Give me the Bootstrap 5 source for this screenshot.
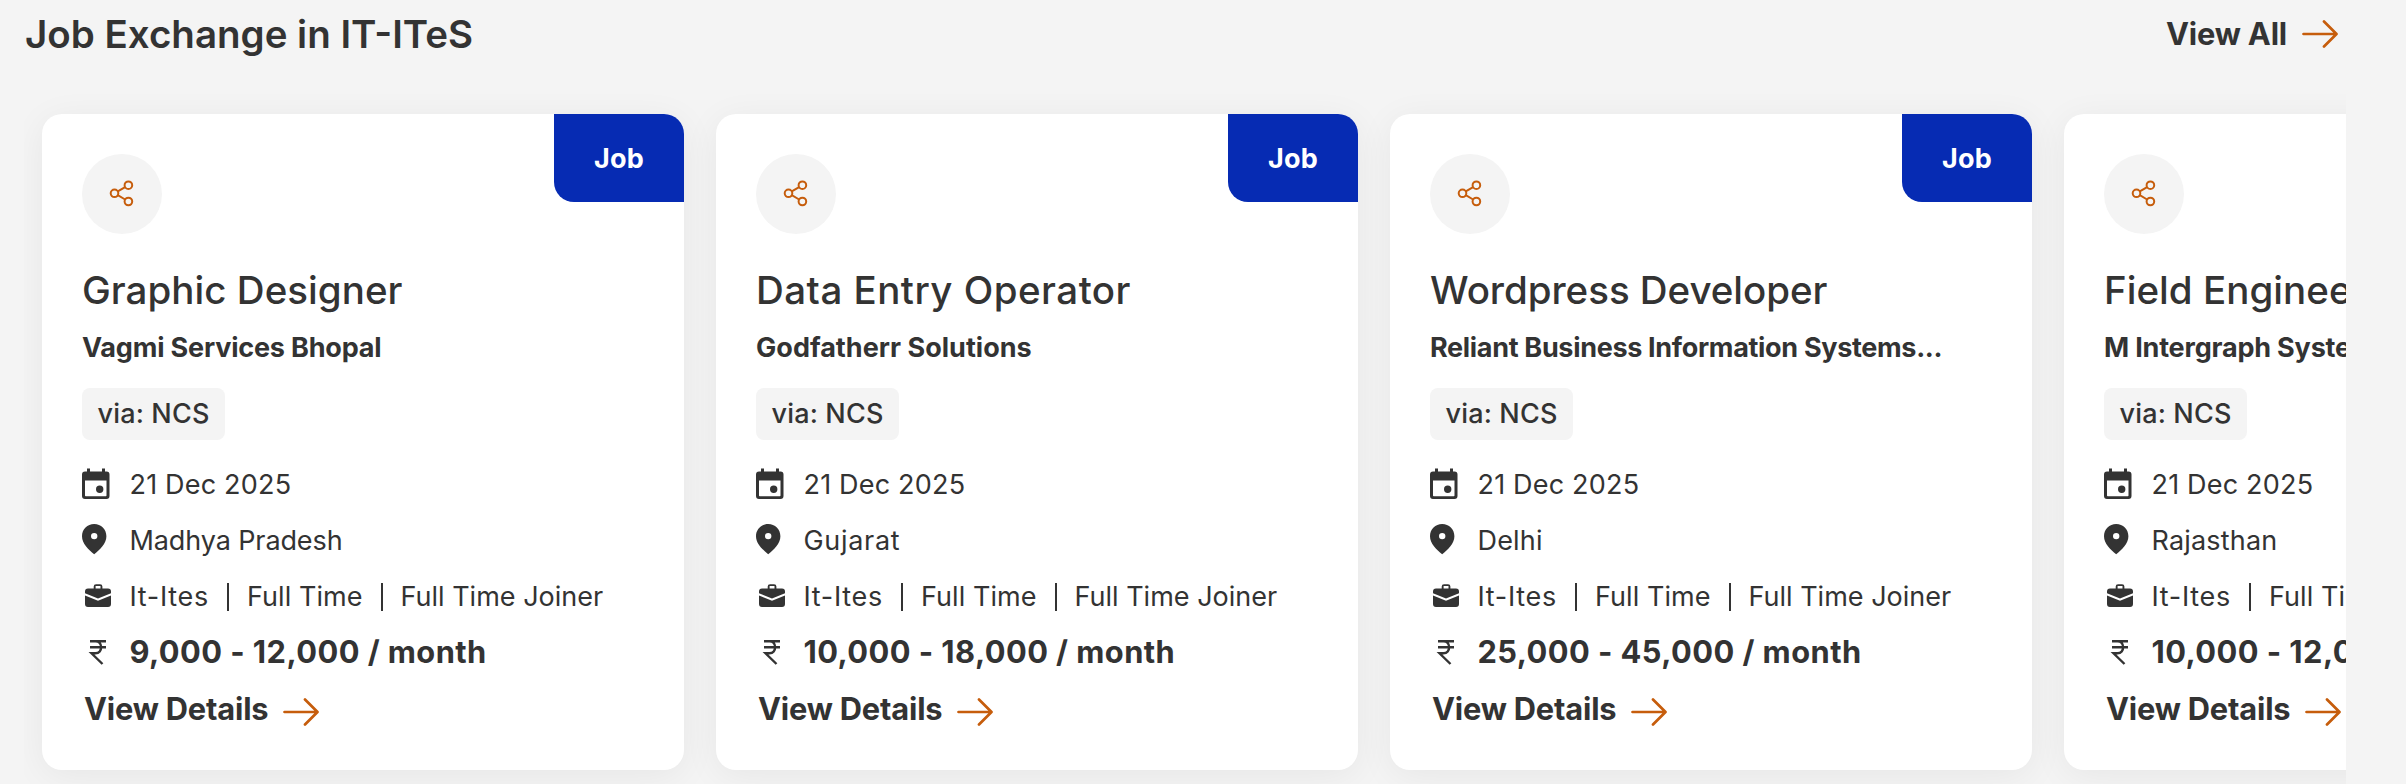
<!DOCTYPE html>
<html lang="en">
<head>
<meta charset="utf-8">
<meta name="viewport" content="width=device-width, initial-scale=1">
<title>Job Exchange in IT-ITeS</title>
<link href="https://cdn.jsdelivr.net/npm/bootstrap@5.3.0/dist/css/bootstrap.min.css" rel="stylesheet">
<style>
  body { background: #f4f4f4; color: #333; font-family: Inter, "Open Sans", sans-serif; overflow: hidden; }
  .exchange { width: 2346px; padding-left: 24px; }
  .exchange-head { height: 68px; padding-right: 8px; margin-bottom: 26px; }
  .exchange-title { padding-left: 1px; font-size: 38.5px; font-weight: 600; line-height: 48px; letter-spacing: 0; }
  .more { color: #333; font-size: 30.8px; font-weight: 700; line-height: 40px; letter-spacing: -.006em; }
  .more svg { width: 36px; height: 30px; color: #c65d0c; }
  .exchange-head .more svg { margin-left: 15px; }
  .track { gap: 32px; padding: 20px 18px 40px; overflow: hidden; }
  .job { width: 642px; height: 656px; flex: none; padding: 40px 30px 30px 40px; border: 0; border-radius: 20px; box-shadow: 0 6px 36px rgba(0,0,0,.06); color: #333; }
  .job > * { flex: none; }
  .kind { top: 0; right: 0; width: 130px; height: 88px; padding-top: 2px; background: #062bb3; border-radius: 0 20px; font-size: 27px; font-weight: 700; letter-spacing: .01em; }
  .share { width: 80px; height: 80px; background: #f4f4f4; color: #c65d0c; }
  .job-title { margin: 30px 0 0; font-size: 38.5px; font-weight: 500; line-height: 52px; letter-spacing: .001em; }
  .t-wide { letter-spacing: .0125em; }
  .t-tight { letter-spacing: -.001em; }
  .org { margin: 14px 0 22px; font-size: 27px; font-weight: 700; line-height: 36px; letter-spacing: -.007em; }
  .o-wide { letter-spacing: .001em; }
  .o-tight { letter-spacing: -.0118em; }
  .via { width: 143px; height: 52px; padding-top: 1px; margin-bottom: 16px; background: #f4f4f4; border-radius: 8px; font-size: 27px; font-weight: 500; letter-spacing: .006em; }
  .fact { height: 56px; padding-top: 2px; font-size: 27px; letter-spacing: .007em; }
  .fact > svg { width: 32px; height: 36px; margin: -2px 15.5px 0 0; flex: none; }
  .place { letter-spacing: -.004em; }
  .sector { letter-spacing: .026em; }
  .time { letter-spacing: .002em; }
  .joiner { letter-spacing: 0; }
  .rule { width: 2px; height: 28px; margin: 0 18px; background: #333; }
  .pay { padding-top: 0; font-size: 30.8px; font-weight: 700; letter-spacing: .0145em; }
  .pay > svg { margin-top: 0; }
  .job .more { height: 56px; padding: 1px 0 0 2px; }
  .job .more svg { margin: 6px 0 0 15px; }
</style>
</head>
<body>
<svg width="0" height="0" class="position-absolute" aria-hidden="true">
  <symbol id="arrow" viewBox="0 0 36 30"><path d="M1.500 15H34M22 2.500 34.500 15 22 27.500" fill="none" stroke="currentColor" stroke-width="2.700" stroke-linecap="round" stroke-linejoin="round"/></symbol>
  <symbol id="share" viewBox="0 0 26 28"><g fill="none" stroke="currentColor" stroke-width="2"><circle cx="5.500" cy="13.300" r="3.800"/><circle cx="19.400" cy="5.200" r="3.800"/><circle cx="19.400" cy="21.500" r="3.800"/><path d="M8.800 11.400 16.100 7.100M8.800 15.200 16.100 19.500"/></g></symbol>
  <symbol id="calendar" viewBox="0 0 32 36"><path fill="currentColor" fill-rule="evenodd" d="M5 2.500H8V5.500H20V2.500H23V5.500H24.500A3 3 0 0 1 27.500 8.500V30A3 3 0 0 1 24.500 33H3A3 3 0 0 1 0 30V8.500A3 3 0 0 1 3 5.500H5ZM3 14.500V29.500A.7.7 0 0 0 3.700 30.200H23.800A.7.7 0 0 0 24.500 29.500V14.500ZM17.700 19.600A3.700 3.700 0 1 1 17.700 27 3.700 3.700 0 0 1 17.700 19.600Z"/></symbol>
  <symbol id="pin" viewBox="0 0 32 36"><path fill="currentColor" fill-rule="evenodd" d="M12.200 2C5.400 2 0 7.200 0 14.200 0 21.500 6.500 27.500 12.200 32.200 17.900 27.500 24.400 21.500 24.400 14.200 24.400 7.200 19 2 12.200 2ZM12.200 10.900A3.200 3.200 0 1 1 12.200 17.300 3.200 3.200 0 0 1 12.200 10.900Z"/></symbol>
  <symbol id="bag" viewBox="0 0 32 36"><path fill="currentColor" fill-rule="evenodd" d="M11.700 10.500V8.600A2.400 2.400 0 0 1 14.100 6.200H18A2.400 2.400 0 0 1 20.400 8.600V10.500H26A3 3 0 0 1 29 13.500V15.300L16 20.600 3 15.300V13.500A3 3 0 0 1 6 10.500ZM13.600 10.500H18.500V8.100H13.600ZM3 17.600 16 22.800 29 17.600V26A3 3 0 0 1 26 29H6A3 3 0 0 1 3 26Z"/></symbol>
  <symbol id="rupee" viewBox="0 0 32 36"><path d="M8 7.200H24M8 13.200H24M8 7.200H13.500C21 7.200 21 19.300 13.500 19.300H9.500L20.500 30" fill="none" stroke="currentColor" stroke-width="2.400"/></symbol>
</svg>

<section class="exchange">
  <header class="exchange-head d-flex align-items-center justify-content-between">
    <h2 class="exchange-title m-0">Job Exchange in IT-ITeS</h2>
    <a href="#" class="more d-flex align-items-center text-decoration-none">View All<svg><use href="#arrow"/></svg></a>
  </header>
  <div class="track d-flex">

    <article class="card job">
      <span class="kind position-absolute d-flex align-items-center justify-content-center text-white">Job</span>
      <button class="share btn rounded-circle border-0 p-0 d-flex align-items-center justify-content-center" aria-label="Share"><svg width="26" height="28"><use href="#share"/></svg></button>
      <h3 class="job-title">Graphic Designer</h3>
      <p class="org text-nowrap">Vagmi Services Bhopal</p>
      <span class="via d-flex align-items-center justify-content-center">via: NCS</span>
      <div class="fact d-flex align-items-center text-nowrap"><svg><use href="#calendar"/></svg>21 Dec 2025</div>
      <div class="fact place d-flex align-items-center text-nowrap"><svg><use href="#pin"/></svg>Madhya Pradesh</div>
      <div class="fact d-flex align-items-center text-nowrap"><svg><use href="#bag"/></svg><span class="sector">It-Ites</span><i class="rule"></i><span class="time">Full Time</span><i class="rule"></i><span class="joiner">Full Time Joiner</span></div>
      <div class="fact pay d-flex align-items-center text-nowrap"><svg><use href="#rupee"/></svg>9,000 - 12,000 / month</div>
      <a href="#" class="more d-flex align-items-center text-decoration-none">View Details<svg><use href="#arrow"/></svg></a>
    </article>

    <article class="card job">
      <span class="kind position-absolute d-flex align-items-center justify-content-center text-white">Job</span>
      <button class="share btn rounded-circle border-0 p-0 d-flex align-items-center justify-content-center" aria-label="Share"><svg width="26" height="28"><use href="#share"/></svg></button>
      <h3 class="job-title t-wide">Data Entry Operator</h3>
      <p class="org o-wide text-nowrap">Godfatherr Solutions</p>
      <span class="via d-flex align-items-center justify-content-center">via: NCS</span>
      <div class="fact d-flex align-items-center text-nowrap"><svg><use href="#calendar"/></svg>21 Dec 2025</div>
      <div class="fact d-flex align-items-center text-nowrap"><svg><use href="#pin"/></svg><span class="sector">Gujarat</span></div>
      <div class="fact d-flex align-items-center text-nowrap"><svg><use href="#bag"/></svg><span class="sector">It-Ites</span><i class="rule"></i><span class="time">Full Time</span><i class="rule"></i><span class="joiner">Full Time Joiner</span></div>
      <div class="fact pay d-flex align-items-center text-nowrap"><svg><use href="#rupee"/></svg>10,000 - 18,000 / month</div>
      <a href="#" class="more d-flex align-items-center text-decoration-none">View Details<svg><use href="#arrow"/></svg></a>
    </article>

    <article class="card job">
      <span class="kind position-absolute d-flex align-items-center justify-content-center text-white">Job</span>
      <button class="share btn rounded-circle border-0 p-0 d-flex align-items-center justify-content-center" aria-label="Share"><svg width="26" height="28"><use href="#share"/></svg></button>
      <h3 class="job-title t-tight">Wordpress Developer</h3>
      <p class="org o-tight text-nowrap">Reliant Business Information Systems...</p>
      <span class="via d-flex align-items-center justify-content-center">via: NCS</span>
      <div class="fact d-flex align-items-center text-nowrap"><svg><use href="#calendar"/></svg>21 Dec 2025</div>
      <div class="fact d-flex align-items-center text-nowrap"><svg><use href="#pin"/></svg>Delhi</div>
      <div class="fact d-flex align-items-center text-nowrap"><svg><use href="#bag"/></svg><span class="sector">It-Ites</span><i class="rule"></i><span class="time">Full Time</span><i class="rule"></i><span class="joiner">Full Time Joiner</span></div>
      <div class="fact pay d-flex align-items-center text-nowrap"><svg><use href="#rupee"/></svg>25,000 - 45,000 / month</div>
      <a href="#" class="more d-flex align-items-center text-decoration-none">View Details<svg><use href="#arrow"/></svg></a>
    </article>

    <article class="card job">
      <button class="share btn rounded-circle border-0 p-0 d-flex align-items-center justify-content-center" aria-label="Share"><svg width="26" height="28"><use href="#share"/></svg></button>
      <h3 class="job-title text-nowrap">Field Engineer</h3>
      <p class="org text-nowrap">M Intergraph Systems</p>
      <span class="via d-flex align-items-center justify-content-center">via: NCS</span>
      <div class="fact d-flex align-items-center text-nowrap"><svg><use href="#calendar"/></svg>21 Dec 2025</div>
      <div class="fact d-flex align-items-center text-nowrap"><svg><use href="#pin"/></svg>Rajasthan</div>
      <div class="fact d-flex align-items-center text-nowrap"><svg><use href="#bag"/></svg><span class="sector">It-Ites</span><i class="rule"></i><span class="time">Full Time</span></div>
      <div class="fact pay d-flex align-items-center text-nowrap"><svg><use href="#rupee"/></svg>10,000 - 12,000</div>
      <a href="#" class="more d-flex align-items-center text-decoration-none">View Details<svg><use href="#arrow"/></svg></a>
    </article>

  </div>
</section>
<script src="https://cdn.jsdelivr.net/npm/bootstrap@5.3.0/dist/js/bootstrap.bundle.min.js"></script>
</body>
</html>
